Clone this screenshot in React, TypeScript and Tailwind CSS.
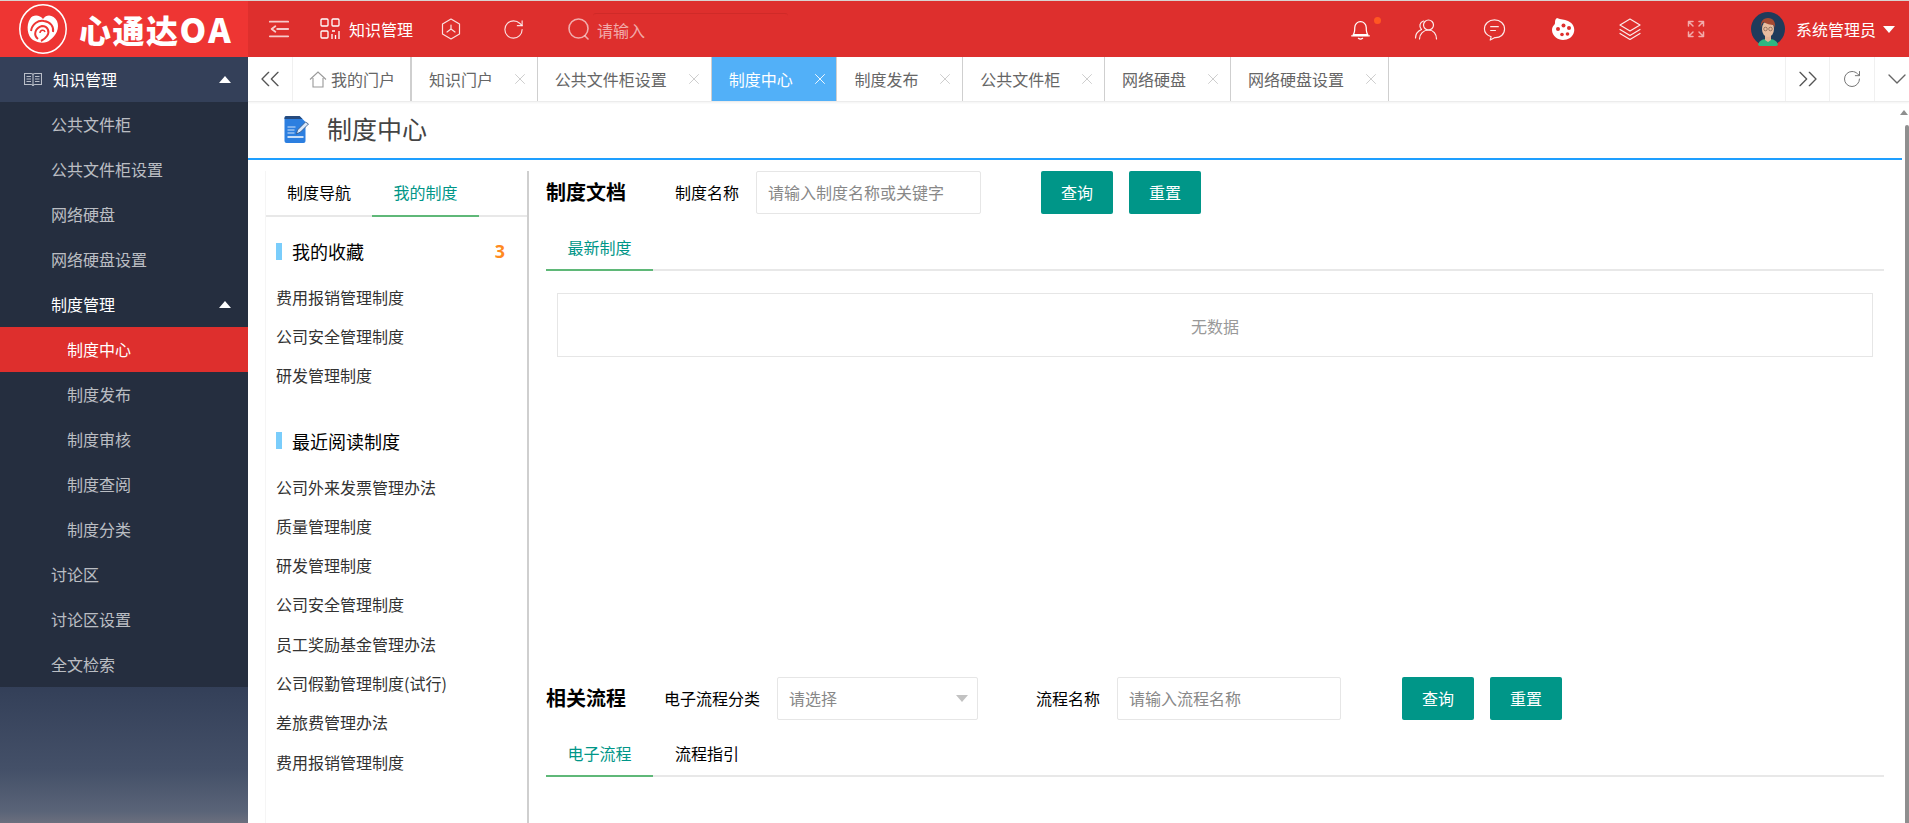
import { ChevronDown, ChevronsLeft, ChevronsRight, RotateCw, X } from "lucide-react";

const menu = [
  { label: "公共文件柜" },
  { label: "公共文件柜设置" },
  { label: "网络硬盘" },
  { label: "网络硬盘设置" },
  { label: "制度管理", open: true },
  { label: "制度中心", sub: true, active: true },
  { label: "制度发布", sub: true },
  { label: "制度审核", sub: true },
  { label: "制度查阅", sub: true },
  { label: "制度分类", sub: true },
  { label: "讨论区" },
  { label: "讨论区设置" },
  { label: "全文检索" },
];

const tabs = ["知识门户", "公共文件柜设置", "制度中心", "制度发布", "公共文件柜", "网络硬盘", "网络硬盘设置"];
const favorites = ["费用报销管理制度", "公司安全管理制度", "研发管理制度"];
const recent = [
  "公司外来发票管理办法",
  "质量管理制度",
  "研发管理制度",
  "公司安全管理制度",
  "员工奖励基金管理办法",
  "公司假勤管理制度(试行)",
  "差旅费管理办法",
  "费用报销管理制度",
];

function Logo() {
  return (
    <svg viewBox="0 0 48 50" className="h-[50px] w-[48px] shrink-0" fill="none">
      <ellipse cx="24" cy="25" rx="23.2" ry="24.2" stroke="#fff" strokeWidth="1.5" />
      <path
        d="M24 15C21 11 14 10 11 15 7 21 8 32 14 36c5 3 13 4 17 0 6-4 10-12 7-19-3-6-10-8-14-2Z"
        fill="#fff"
      />
      <path d="M12 27c1-7 7-11 13-10 7 1 10 6 9 11" stroke="#ee3533" strokeWidth="2" />
      <path d="M19 35c-5-4-3-11 4-13 6 0 8 6 5 10-2 3-4 4-6 5" stroke="#ee3533" strokeWidth="2" />
      <path d="M21 29c0-3 4-4 5-1" stroke="#ee3533" strokeWidth="1.5" />
    </svg>
  );
}

function BookIcon() {
  return (
    <svg viewBox="0 0 18 15" className="h-[15px] w-[18px] shrink-0" fill="none" stroke="#b9bec8" strokeWidth="1.1">
      <path d="M.5 1.500h6.500c1 0 2 .5 2 1.500 0-1 1-1.500 2-1.500h6.500v11H11c-1 0-2 .5-2 1.500 0-1-1-1.500-2-1.500H.5Z" />
      <path d="M9 3v11M2.500 4.500h4.500M2.500 7h4.500M2.500 9.500h4.500M11 4.500h4.500M11 7h4.500M11 9.500h4.500" />
    </svg>
  );
}

function DocIcon() {
  return (
    <svg viewBox="0 0 26 28" className="h-7 w-[27px] shrink-0">
      <path d="M1 3a2 2 0 0 1 2-2h13l6 6v19a2 2 0 0 1-2 2H3a2 2 0 0 1-2-2Z" fill="#2c7fe0" />
      <path d="M1 3a2 2 0 0 1 2-2h13l3 3H1Z" fill="#274b7d" />
      <path d="M4 12h8M4 15h7M4 18h7" stroke="#cfe3fa" strokeWidth="1.2" />
      <path d="M4 22h16" stroke="#fff" strokeWidth="1.5" />
      <path d="m13 19 1-4 8-8 3 2-8 8Z" fill="#dbe9fa" stroke="#2c4f80" strokeWidth="0.8" />
    </svg>
  );
}

function Avatar() {
  return (
    <svg viewBox="0 0 34 34" className="h-[34px] w-[34px] shrink-0">
      <circle cx="17" cy="17" r="17" fill="#1f3b5b" />
      <path d="M7 33c1-5 5-6 10-6s9 1 10 6a17 17 0 0 1-20 0Z" fill="#2fb781" />
      <path d="M14 22h6v6l-3 2-3-2Z" fill="#e4b295" />
      <ellipse cx="17" cy="17" rx="6" ry="8" fill="#e9bda0" />
      <path d="M10 16c-1-6 2-10 7-10s8 4 7 10l-1-3c-3 0-8-1-10-3-2 1-3 3-3 6Z" fill="#a54a33" />
      <circle cx="14.5" cy="17" r="1.8" fill="none" stroke="#6b4a3c" strokeWidth="0.6" />
      <circle cx="19.5" cy="17" r="1.8" fill="none" stroke="#6b4a3c" strokeWidth="0.6" />
    </svg>
  );
}

function TopIcon({ children, className }: { children: React.ReactNode; className: string }) {
  return (
    <svg
      viewBox="0 0 24 24"
      fill="none"
      stroke="currentColor"
      strokeWidth="1.2"
      strokeLinecap="round"
      strokeLinejoin="round"
      className={className}
    >
      {children}
    </svg>
  );
}

function Header() {
  return (
    <header className="flex h-[57px] shrink-0 border-t border-[#d8d3d0] bg-[#de2f2d] text-white">
      <div className="flex w-[248px] shrink-0 items-center bg-[#ee3533] pl-[19px]">
        <Logo />
        <span className="ml-[12px] flex items-center whitespace-nowrap text-[32px] leading-none font-black tracking-[1.5px]">
          心通达<span className="text-[34px] tracking-[2.5px]">OA</span>
        </span>
      </div>
      <div className="flex flex-1 items-center">
        <TopIcon className="ml-[20px] h-[22px] w-[22px] text-white/75">
          <path d="M2 4h20M10 12h12M2 20h20M8 9l-4 3 4 3" strokeWidth="2" />
        </TopIcon>
        <svg viewBox="0 0 20 22" className="ml-[30px] h-[22px] w-5 shrink-0" fill="none" stroke="#fff" strokeWidth="1.3">
          <rect x="1" y="1" width="7" height="7" rx="1" />
          <rect x="12" y="1" width="7" height="7" rx="1" />
          <rect x="1" y="13" width="7" height="7" rx="1" />
          <path d="M12 13h3M12 16v5M15.5 17v4M19 13v8" />
        </svg>
        <span className="ml-[9px] text-base">知识管理</span>
        <TopIcon className="ml-[26px] h-6 w-6 text-white/85">
          <path d="m12 2 8.5 5v10L12 22l-8.5-5V7Z" />
          <path d="M12 8v4l-4 3M12 12l4 3" />
        </TopIcon>
        <RotateCw className="ml-[39px] h-[23px] w-[23px] text-white/85" strokeWidth={1.2} />
        <TopIcon className="ml-[42px] h-6 w-6 text-white/60">
          <circle cx="11.5" cy="11.5" r="9.5" strokeWidth="1.6" />
          <path d="m18 19 3 3" strokeWidth="1.6" />
        </TopIcon>
        <div className="ml-[2px] flex h-[32px] w-[195px] items-center self-center rounded-t-[3px] border-t border-[#cf2a28] pl-[4px] text-base text-white/60">
          请输入
        </div>

        <div className="ml-auto flex items-center pr-[14px]">
          <div className="relative">
            <TopIcon className="h-[25px] w-[25px]">
              <path d="M5 17c1.5-2 1.5-4 1.5-7a5.5 5.5 0 0 1 11 0c0 3 0 5 1.500 7ZM3.500 18h17M10 20.500c1 .8 3 .8 4 0" />
            </TopIcon>
            <span className="absolute top-[0px] right-[-8px] h-[7px] w-[7px] rounded-full bg-[#ff5722]" />
          </div>
          <TopIcon className="ml-[41px] h-6 w-6 text-white/90">
            <circle cx="14.500" cy="8" r="5" />
            <path d="M5.500 22c0-5 4-9 9-9s8 4 8 9M9.500 4a5 5 0 0 0-2 8.500C4 14 1.500 17 1.500 21" />
          </TopIcon>
          <TopIcon className="ml-[45px] h-[23px] w-[23px] text-white/90">
            <path d="M12 2c6 0 10.500 4 10.500 9.500S18 21 12 20.500L7.500 23l1-3.500C4 18 1.500 15 1.500 11.500 1.500 6 6 2 12 2Z" />
            <path d="M8 9h8M8 13h5" />
          </TopIcon>
          <svg viewBox="0 0 24 24" className="ml-[45px] h-6 w-6 shrink-0">
            <path
              d="M6 1c4 2 7 1 11 3 5 2 7 7 6 11-1 5-6 8-11 8S1 19 1 13c0-4 3-5 3-7s0-4 2-5Z"
              fill="#fff"
            />
            <circle cx="7" cy="12" r="2" fill="#de2f2d" />
            <circle cx="12.500" cy="8.500" r="2" fill="#de2f2d" />
            <circle cx="18" cy="11" r="2" fill="#de2f2d" />
            <circle cx="11" cy="17.500" r="1.800" fill="#de2f2d" />
            <circle cx="16.500" cy="17" r="1.800" fill="#de2f2d" />
          </svg>
          <TopIcon className="ml-[43px] h-6 w-6 text-white/90">
            <path d="m12 2 10 6-10 6L2 8ZM2 12.500l10 6 10-6M2 16.500l10 6 10-6" />
          </TopIcon>
          <TopIcon className="ml-[45px] h-[18px] w-[18px] text-white/60">
            <path
              d="M2 8V2h6M2 2l6 6M22 8V2h-6M22 2l-6 6M2 16v6h6M2 22l6-6M22 16v6h-6M22 22l-6-6"
              strokeWidth="2"
            />
          </TopIcon>
          <div className="ml-[46px]">
            <Avatar />
          </div>
          <span className="ml-[11px] text-base">系统管理员</span>
          <span className="mt-[1px] ml-[7px] h-0 w-0 border-x-[6px] border-t-[7px] border-x-transparent border-t-white" />
        </div>
      </div>
    </header>
  );
}

function Caret() {
  return <span className="h-0 w-0 border-x-[6px] border-b-[7px] border-x-transparent border-b-white" />;
}

function Sidebar() {
  return (
    <aside className="flex w-[248px] shrink-0 flex-col bg-[linear-gradient(to_bottom,#333f58_0%,#333f58_82%,#445068_93%,#5a6478_98.5%,#6b6f7e_100%)]">
      <div className="flex h-[45px] items-center bg-[#344059] pr-[17px] pl-[24px] text-base text-white">
        <BookIcon />
        <span className="ml-[11px] flex-1 pb-[1px]">知识管理</span>
        <Caret />
      </div>
      <nav className="bg-[#252e3f]">
        {menu.map((item) => (
          <div
            key={item.label}
            className={
              "flex h-[45px] items-center pr-[17px] text-base " +
              (item.sub ? "pl-[67px] " : "pl-[51px] ") +
              (item.active ? "bg-[#de2f2d] text-white " : item.open ? "text-white " : "text-white/70 ")
            }
          >
            <span className="flex-1 pb-[2px]">{item.label}</span>
            {item.open && <Caret />}
          </div>
        ))}
      </nav>
    </aside>
  );
}

function TabBar() {
  return (
    <div className="flex h-[45px] shrink-0 border-b border-[#ececec] bg-white text-base text-[#666] shadow-[0_1px_2px_rgba(0,0,0,0.05)]">
      <div className="flex w-[45px] items-center justify-center border-r border-[#f0f0f0]">
        <ChevronsLeft className="h-8 w-8 text-[#555]" strokeWidth={1} />
      </div>
      <div className="flex w-[119px] items-center border-r-2 border-[#cfcfcf] pl-[16px]">
        <svg viewBox="0 0 18 18" className="h-[18px] w-[18px]" fill="none" stroke="#999" strokeWidth="1.1">
          <path d="M1 9.500 9 2l8 7.500M4 8v9h10V8" />
        </svg>
        <span className="ml-[4px]">我的门户</span>
      </div>
      {tabs.map((tab) => (
        <div
          key={tab}
          className={
            "flex items-center border-r border-[#cfcfcf] pr-[7.8px] pl-[17px] " +
            (tab === "制度中心" ? "bg-[#52b0f8] text-white" : "")
          }
        >
          <span>{tab}</span>
          <X
            className={"ml-[18px] h-[18px] w-[18px] " + (tab === "制度中心" ? "text-white" : "text-[#c8c8c8]")}
            strokeWidth={1.2}
          />
        </div>
      ))}
      <div className="ml-auto flex">
        <div className="flex w-[45px] items-center justify-center border-x border-[#f0f0f0]">
          <ChevronsRight className="h-8 w-8 text-[#555]" strokeWidth={1} />
        </div>
        <div className="flex w-[45px] items-center justify-center border-r border-[#f0f0f0]">
          <RotateCw className="h-5 w-5 text-[#777]" strokeWidth={1.2} />
        </div>
        <div className="flex w-[34px] items-center justify-center pl-[10px]">
          <ChevronDown className="h-8 w-8 shrink-0 text-[#666]" strokeWidth={1} />
        </div>
      </div>
    </div>
  );
}

function SideList({ title, count, items, top }: { title: string; count?: number; items: string[]; top: string }) {
  return (
    <section className={top}>
      <div className="flex h-[26px] items-center pr-[22px] pl-[10px]">
        <span className="h-[17px] w-[6px] bg-[#7acdfb]" />
        <span className="ml-[10px] flex-1 text-lg text-black">{title}</span>
        {count !== undefined && (
          <span className="text-lg font-bold text-[#ff8a1e] [font-family:'Open_Sans',sans-serif]">{count}</span>
        )}
      </div>
      <ul className="mt-[13px] pl-[10px] text-base text-[#333]">
        {items.map((item, i) => (
          <li key={item + i} className="flex h-[39.3px] items-center">
            {item}
          </li>
        ))}
      </ul>
    </section>
  );
}

function LeftPanel() {
  return (
    <div className="mt-[11px] ml-[17px] flex w-[264px] shrink-0 flex-col border-r-2 border-[#cfcfcf] border-l border-l-[#f5f5f5]">
      <div className="flex h-[46px] border-b-2 border-[#e8e8e8] text-base">
        <div className="flex w-[106px] items-center justify-center pb-[2px] text-black">制度导航</div>
        <div className="mb-[-2px] flex w-[107px] items-center justify-center border-b-2 border-[#5fb878] pb-[2px] text-[#009688]">
          我的制度
        </div>
      </div>
      <SideList title="我的收藏" count={3} items={favorites} top="mt-[21px]" />
      <SideList title="最近阅读制度" items={recent} top="mt-[33px]" />
    </div>
  );
}

function Field({
  label,
  placeholder,
  width,
  select,
}: {
  label: string;
  placeholder: string;
  width: string;
  select?: boolean;
}) {
  return (
    <div className="flex items-center">
      <span className="pb-[2px] text-base text-black">{label}</span>
      <div className={"relative ml-[17px] flex h-[43px] items-center rounded-[2px] border border-[#e6e6e6] pb-[2px] pl-[11px] text-base text-[#888] " + width}>
        {placeholder}
        {select && (
          <span className="absolute top-[17px] right-[9px] h-0 w-0 border-x-[6px] border-t-[7px] border-x-transparent border-t-[#c2c2c2]" />
        )}
      </div>
    </div>
  );
}

function Btn({ children }: { children: React.ReactNode }) {
  return (
    <button className="flex h-[43px] w-[72px] items-center justify-center rounded-[2px] bg-[#009688] pb-[2px] text-base text-white">
      {children}
    </button>
  );
}

function SubTabs({ items }: { items: string[] }) {
  return (
    <div className="flex h-[44px] w-[1338px] border-b-2 border-[#e8e8e8] text-base">
      {items.map((item, i) => (
        <div
          key={item}
          className={
            i === 0
              ? "mb-[-2px] flex w-[107px] items-center justify-center border-b-2 border-[#5fb878] pb-[2px] text-[#009688]"
              : "flex items-center pb-[2px] pl-[22px] text-black"
          }
        >
          {item}
        </div>
      ))}
    </div>
  );
}

function RightPanel() {
  return (
    <div className="ml-[17px] min-w-0 flex-1">
      <div className="h-[517px] pt-[11px]">
        <div className="flex items-center">
          <h2 className="w-[129px] pb-[2px] text-[20px] font-bold text-black">制度文档</h2>
          <Field label="制度名称" placeholder="请输入制度名称或关键字" width="w-[225px]" />
          <div className="ml-[60px] flex gap-[16px]">
            <Btn>查询</Btn>
            <Btn>重置</Btn>
          </div>
        </div>
        <div className="mt-[13px]">
          <SubTabs items={["最新制度"]} />
        </div>
        <div className="mt-[22px] ml-[11px] flex h-[64px] w-[1316px] items-center justify-center border border-[#e6e6e6] pt-[2px] text-base text-[#999]">
          无数据
        </div>
      </div>
      <div className="flex items-center">
        <h2 className="w-[118px] pb-[2px] text-[20px] font-bold text-black">相关流程</h2>
        <Field label="电子流程分类" placeholder="请选择" width="w-[201px]" select />
        <div className="ml-[58px]">
          <Field label="流程名称" placeholder="请输入流程名称" width="w-[224px]" />
        </div>
        <div className="ml-[61px] flex gap-[16px]">
          <Btn>查询</Btn>
          <Btn>重置</Btn>
        </div>
      </div>
      <div className="mt-[13px]">
        <SubTabs items={["电子流程", "流程指引"]} />
      </div>
    </div>
  );
}

export default function App() {
  return (
    <div className="relative flex h-[823px] w-[1909px] flex-col overflow-hidden bg-white [font-family:'Noto_Sans_CJK_SC','Liberation_Sans',sans-serif]">
      <Header />
      <div className="flex min-h-0 flex-1">
        <Sidebar />
        <main className="flex min-w-0 flex-1 flex-col">
          <TabBar />
          <div className="mr-[7px] flex h-[58px] shrink-0 items-center border-b-2 border-[#1e9fff] pb-[2px] pl-[35px]">
            <DocIcon />
            <span className="ml-[17px] text-[25px] text-[#444]">制度中心</span>
          </div>
          <div className="flex min-h-0 flex-1">
            <LeftPanel />
            <RightPanel />
          </div>
        </main>
      </div>
      <span className="absolute top-[110px] right-[1px] h-0 w-0 border-x-[4px] border-b-[5px] border-x-transparent border-b-[#8f8f8f]" />
      <span className="absolute top-[125px] right-0 bottom-0 w-[4px] rounded-t-[3px] bg-[#8f8f8f]" />
    </div>
  );
}
